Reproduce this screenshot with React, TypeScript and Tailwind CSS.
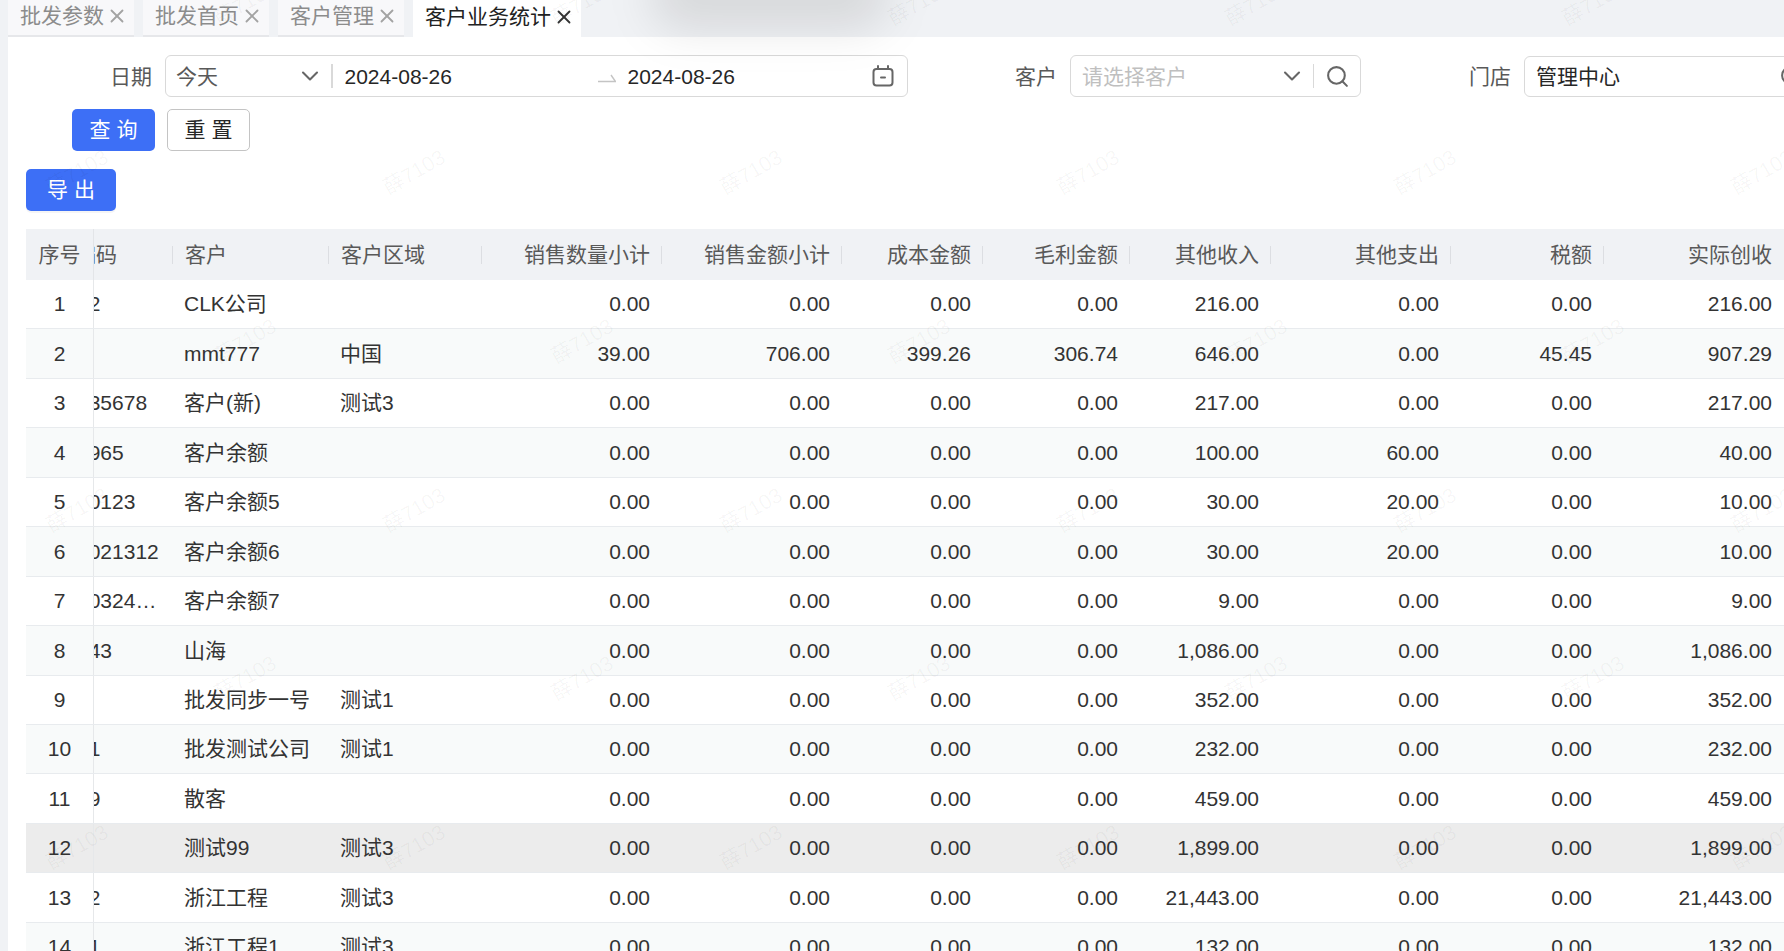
import { ChevronDown, Search, X } from "lucide-react";

const tabs = ["批发参数", "批发首页", "客户管理", "客户业务统计"];
const tabWidths = ["w-[126px]", "w-[126px]", "w-[126px]", "w-[168px]"];

const gridCols = "grid grid-cols-[68px_79px_156px_153px_180px_180px_141px_147px_141px_180px_153px_180px]";

const headers = ["销售数量小计", "销售金额小计", "成本金额", "毛利金额", "其他收入", "其他支出", "税额", "实际创收"];

type Row = { code: string; name: string; region: string; nums: string[] };

const rows: Row[] = [
  { code: "12", name: "CLK公司", region: "", nums: ["0.00", "0.00", "0.00", "0.00", "216.00", "0.00", "0.00", "216.00"] },
  { code: "", name: "mmt777", region: "中国", nums: ["39.00", "706.00", "399.26", "306.74", "646.00", "0.00", "45.45", "907.29"] },
  { code: "135678", name: "客户(新)", region: "测试3", nums: ["0.00", "0.00", "0.00", "0.00", "217.00", "0.00", "0.00", "217.00"] },
  { code: "1965", name: "客户余额", region: "", nums: ["0.00", "0.00", "0.00", "0.00", "100.00", "60.00", "0.00", "40.00"] },
  { code: "10123", name: "客户余额5", region: "", nums: ["0.00", "0.00", "0.00", "0.00", "30.00", "20.00", "0.00", "10.00"] },
  { code: "1021312", name: "客户余额6", region: "", nums: ["0.00", "0.00", "0.00", "0.00", "30.00", "20.00", "0.00", "10.00"] },
  { code: "103241234", name: "客户余额7", region: "", nums: ["0.00", "0.00", "0.00", "0.00", "9.00", "0.00", "0.00", "9.00"] },
  { code: "143", name: "山海", region: "", nums: ["0.00", "0.00", "0.00", "0.00", "1,086.00", "0.00", "0.00", "1,086.00"] },
  { code: "", name: "批发同步一号", region: "测试1", nums: ["0.00", "0.00", "0.00", "0.00", "352.00", "0.00", "0.00", "352.00"] },
  { code: "01", name: "批发测试公司", region: "测试1", nums: ["0.00", "0.00", "0.00", "0.00", "232.00", "0.00", "0.00", "232.00"] },
  { code: "09", name: "散客", region: "", nums: ["0.00", "0.00", "0.00", "0.00", "459.00", "0.00", "0.00", "459.00"] },
  { code: "", name: "测试99", region: "测试3", nums: ["0.00", "0.00", "0.00", "0.00", "1,899.00", "0.00", "0.00", "1,899.00"] },
  { code: "12", name: "浙江工程", region: "测试3", nums: ["0.00", "0.00", "0.00", "0.00", "21,443.00", "0.00", "0.00", "21,443.00"] },
  { code: "01", name: "浙江工程1", region: "测试3", nums: ["0.00", "0.00", "0.00", "0.00", "132.00", "0.00", "0.00", "132.00"] },
];

const watermarkRows = [3, 172, 341, 510, 678, 847];

function Watermarks() {
  return (
    <>
      {watermarkRows.map((top, i) =>
        [0, 1, 2, 3, 4, 5].map((k) => (
          <span
            key={`${i}-${k}`}
            className="pointer-events-none absolute -translate-x-1/2 -translate-y-1/2 -rotate-30 whitespace-nowrap text-[21px] text-black/[0.04]"
            style={{ left: (i % 2 === 0 ? 245 : 77) + k * 337, top }}
          >
            薛7103
          </span>
        ))
      )}
    </>
  );
}

function CalendarIcon() {
  return (
    <svg width="22" height="22" viewBox="0 0 22 22" fill="none" stroke="#666" strokeWidth="2" strokeLinecap="round" className="shrink-0">
      <rect x="1.5" y="4" width="19" height="16.5" rx="3" />
      <path d="M6 1v3M16 1v3" />
      <path d="M9 12.5h4" />
    </svg>
  );
}

function HeaderCell({ label, align, sep = true }: { label: string; align: "left" | "right"; sep?: boolean }) {
  return (
    <div className="flex items-center">
      <span className={`flex-1 whitespace-nowrap text-[#595959] ${align === "right" ? "text-right" : "pl-3"} ${align === "right" && sep ? "pr-[10.5px]" : ""} ${!sep ? "pr-3" : ""}`}>{label}</span>
      {sep && <span className="h-[18px] w-[1.5px] shrink-0 bg-[#dcdee2]" />}
    </div>
  );
}

export default function App() {
  return (
    <div className="relative flex h-[951px] w-[1784px] overflow-hidden bg-white text-[21px] text-[#333] [font-family:'Liberation_Sans','Noto_Sans_CJK_SC',sans-serif]">
      <div className="w-[8px] shrink-0 bg-[#f0f2f5]" />

      <div className="flex min-w-0 flex-1 flex-col">
        {/* tabs */}
        <div className="flex h-[37px] shrink-0 gap-[9px] bg-[#f0f2f5]">
          {tabs.map((t, i) => {
            const active = i === tabs.length - 1;
            return (
              <div
                key={t}
                className={`flex h-[37px] items-center pb-[3px] pl-3 ${tabWidths[i]} ${
                  active ? "bg-white text-[#222]" : "border-b-2 border-[#e6e7ea] bg-[#f8f8fa] text-[#8c8c8c]"
                }`}
              >
                <span className="whitespace-nowrap">{t}</span>
                <X size={22} strokeWidth={2} className={`ml-[2px] shrink-0 ${active ? "text-[#333]" : "text-[#a3a3a3]"}`} />
              </div>
            );
          })}
        </div>

        {/* filters */}
        <div className="mt-[18px] flex h-[42px] shrink-0 items-center whitespace-nowrap pl-[102px]">
          <span className="shrink-0 pt-[2px] text-[#595959]">日期</span>
          <div className="ml-[13px] flex h-[42px] w-[743px] shrink-0 items-center rounded-[6px] border border-[#d9d9d9]">
            <div className="flex w-[165px] items-center pl-[10px] pr-[7px]">
              <span className="flex-1 pt-[2px] text-[#595959]">今天</span>
              <ChevronDown size={28} strokeWidth={1.8} className="shrink-0 text-[#666]" />
            </div>
            <span className="h-[24px] w-[1.5px] bg-[#d9d9d9]" />
            <span className="ml-[12px] w-[253px] pt-[2px] text-[#262626]">2024-08-26</span>
            <svg width="18" height="10" viewBox="0 0 18 10" fill="none" stroke="#c4c4c4" strokeWidth="1.4" className="mt-[3px] shrink-0">
              <path d="M0 8.5h17.5L13 2" />
            </svg>
            <span className="ml-[12px] pt-[2px] text-[#262626]">2024-08-26</span>
            <div className="ml-auto mr-[13px]">
              <CalendarIcon />
            </div>
          </div>

          <span className="ml-[107px] shrink-0 pt-[2px] text-[#595959]">客户</span>
          <div className="ml-[13px] flex h-[42px] w-[291px] shrink-0 items-center rounded-[6px] border border-[#d9d9d9] pl-[11px]">
            <span className="flex-1 pt-[2px] text-[#bfbfbf]">请选择客户</span>
            <ChevronDown size={28} strokeWidth={1.8} className="shrink-0 text-[#666]" />
            <span className="ml-[7px] h-[24px] w-[1.5px] shrink-0 bg-[#d9d9d9]" />
            <Search size={25} strokeWidth={2} className="ml-[11px] mr-[10px] shrink-0 text-[#666]" />
          </div>

          <span className="ml-[108px] shrink-0 pt-[2px] text-[#595959]">门店</span>
          <div className="ml-[13px] flex h-[41px] w-[290px] shrink-0 items-center self-end rounded-[6px] border border-[#d9d9d9] pl-[11px]">
            <span className="w-[243px] shrink-0 pt-[1px] text-[#262626]">管理中心</span>
            <Search size={25} strokeWidth={2} className="shrink-0 text-[#666]" />
          </div>
        </div>

        {/* actions */}
        <div className="mt-[12px] flex shrink-0 gap-[12px] pl-[64px]">
          <button className="h-[42px] w-[83px] rounded-[5px] bg-[#3d6ff6] text-white">查 询</button>
          <button className="h-[42px] w-[83px] rounded-[5px] border border-[#c4c4c4] bg-white text-[#262626]">重 置</button>
        </div>

        <div className="mt-[18px] shrink-0 pl-[18px]">
          <button className="h-[42px] w-[90px] rounded-[5px] bg-[#3d6ff6] text-white shadow-[0_2px_0_rgba(0,0,0,0.04)]">导 出</button>
        </div>

        {/* table */}
        <div className="ml-[18px] mt-[18px] w-[1758px] shrink-0">
          <div className={`${gridCols} h-[51px] bg-[#f0f2f5]`}>
            <div className="flex items-center justify-center border-r border-[#e3e5e8] text-[#595959]">序号</div>
            <div className="flex items-center overflow-hidden">
              <span className="ml-[-19px] w-[96.5px] shrink-0 whitespace-nowrap text-[#595959]">编码</span>
              <span className="h-[18px] w-[1.5px] shrink-0 bg-[#dcdee2]" />
            </div>
            <HeaderCell label="客户" align="left" />
            <HeaderCell label="客户区域" align="left" />
            {headers.map((h, i) => (
              <HeaderCell key={h} label={h} align="right" sep={i !== headers.length - 1} />
            ))}
          </div>

          {rows.map((r, i) => (
            <div
              key={i}
              className={`${gridCols} h-[49.45px] border-b border-[#e8ebee] ${
                i === 11 ? "bg-[#ececec]" : i % 2 === 1 ? "bg-[#f8fafa]" : "bg-white"
              }`}
            >
              <div className="flex items-center justify-center border-r border-[#e6e8ea]">{i + 1}</div>
              <div className="flex items-center overflow-hidden">
                <span className="ml-[-17px] w-[84px] shrink-0 truncate">{r.code}</span>
              </div>
              <div className="flex items-center whitespace-nowrap pl-[11px]">{r.name}</div>
              <div className="flex items-center whitespace-nowrap pl-[11px]">{r.region}</div>
              {r.nums.map((n, j) => (
                <div key={j} className="flex items-center justify-end pr-3">{n}</div>
              ))}
            </div>
          ))}
        </div>
      </div>

      {/* soft shadow left over by a closing dropdown */}
      <div className="pointer-events-none absolute left-[650px] top-[-40px] h-[70px] w-[240px] rounded-full bg-black/10 blur-[22px]" />

      <Watermarks />
    </div>
  );
}
